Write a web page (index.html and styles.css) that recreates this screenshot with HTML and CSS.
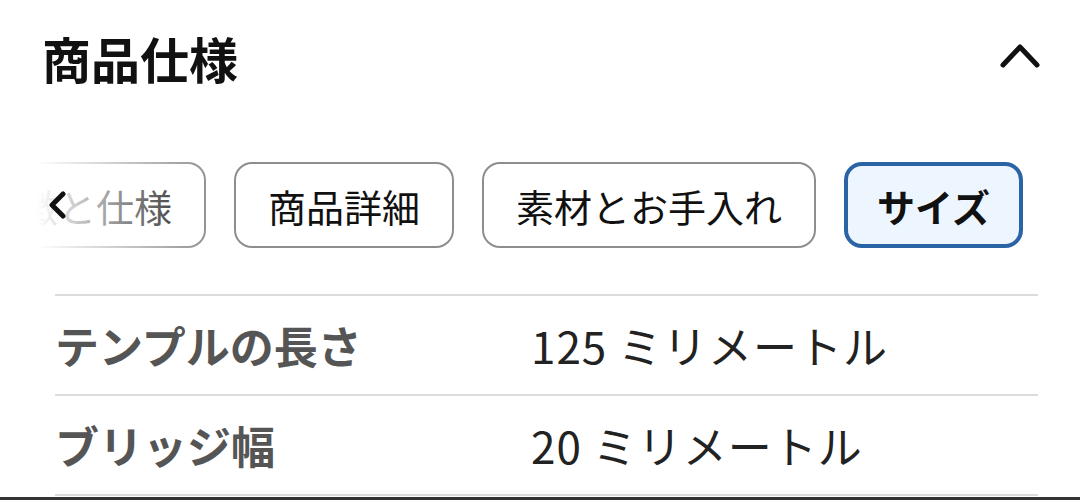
FILE: index.html
```html
<!DOCTYPE html>
<html>
<head>
<meta charset="utf-8">
<link rel="stylesheet" href="styles.css">
</head>
<body>

<div class="specs">
  <div class="specs-head">
    <h2 class="specs-title">商品仕様</h2>
    <svg class="toggle" width="40" height="26" viewBox="0 0 40 26">
      <path d="M3 21 L20 3 L37 21" fill="none" stroke="#111" stroke-width="5" stroke-linecap="round" stroke-linejoin="round"/>
    </svg>
  </div>

  <div class="tab-strip">
    <div class="tab-track">
      <div class="tab">特徴と仕様</div>
      <div class="tab">商品詳細</div>
      <div class="tab">素材とお手入れ</div>
      <div class="tab active">サイズ</div>
    </div>
    <div class="tab-fade"></div>
    <svg class="tab-prev" width="22" height="28" viewBox="0 0 22 28">
      <path d="M17 3 L6 14 L17 25" fill="none" stroke="#111" stroke-width="5" stroke-linecap="round" stroke-linejoin="round"/>
    </svg>
  </div>

  <div class="spec-table">
    <div class="spec-row">
      <div class="spec-label">テンプルの長さ</div>
      <div class="spec-value">125 ミリメートル</div>
    </div>
    <div class="spec-row">
      <div class="spec-label">ブリッジ幅</div>
      <div class="spec-value">20 ミリメートル</div>
    </div>
  </div>
</div>

<div class="page-bar"></div>

</body>
</html>
```

FILE: styles.css
```css
html, body {
  margin: 0;
  height: 100%;
  overflow: hidden;
}
body {
  background: #fff;
  color: #111;
  font-family: "Noto Sans CJK JP", "Noto Sans", sans-serif;
}
.specs {
  padding: 0 42px 0 42px;
}
.specs-head {
  display: flex;
  justify-content: space-between;
  align-items: center;
  height: 114px;
}
.specs-title {
  margin: 0;
  font-size: 49px;
  font-weight: 700;
  line-height: 1;
}
.toggle {
  display: block;
  margin-right: -2px;
}

/* tabs: scrolled a little to the right, so the first one is cut off */
.tab-strip {
  position: relative;
  margin: 48px -42px 0 -42px;
  height: 86px;
  overflow: hidden;
}
.tab-track {
  display: flex;
  gap: 28px;
  margin-left: -52px;
}
.tab {
  flex: none;
  box-sizing: border-box;
  height: 86px;
  display: flex;
  align-items: center;
  padding: 0 32px;
  border: 2px solid #8e8e8e;
  border-radius: 18px;
  background: #fff;
  font-size: 38px;
  white-space: nowrap;
  color: #111;
}
.tab.active {
  padding: 0 29px;
  border: 4px solid #2b64a5;
  background: #edf5ff;
  font-weight: 700;
}
.tab-fade {
  position: absolute;
  left: 0;
  top: 0;
  bottom: 0;
  width: 215px;
  background: linear-gradient(to right, #fff 17%, rgba(255, 255, 255, 0.55) 55%, rgba(255, 255, 255, 0) 100%);
}
.tab-prev {
  position: absolute;
  left: 46px;
  top: 29px;
}

.spec-table {
  margin: 46px 0 0 13px;
}
.spec-row {
  display: grid;
  grid-template-columns: 476px 1fr;
  align-items: center;
  box-sizing: border-box;
  height: 100px;
  border-top: 2px solid #dcdcdc;
  font-size: 44px;
}
.spec-row:last-child {
  border-bottom: 2px solid #dcdcdc;
  height: 102px;
}
.spec-label {
  font-weight: 700;
  color: #555;
}
.spec-value {
  color: #222;
  letter-spacing: 1px;
}
.page-bar {
  margin-top: 1px;
  height: 4px;
  background: #333;
}
```
